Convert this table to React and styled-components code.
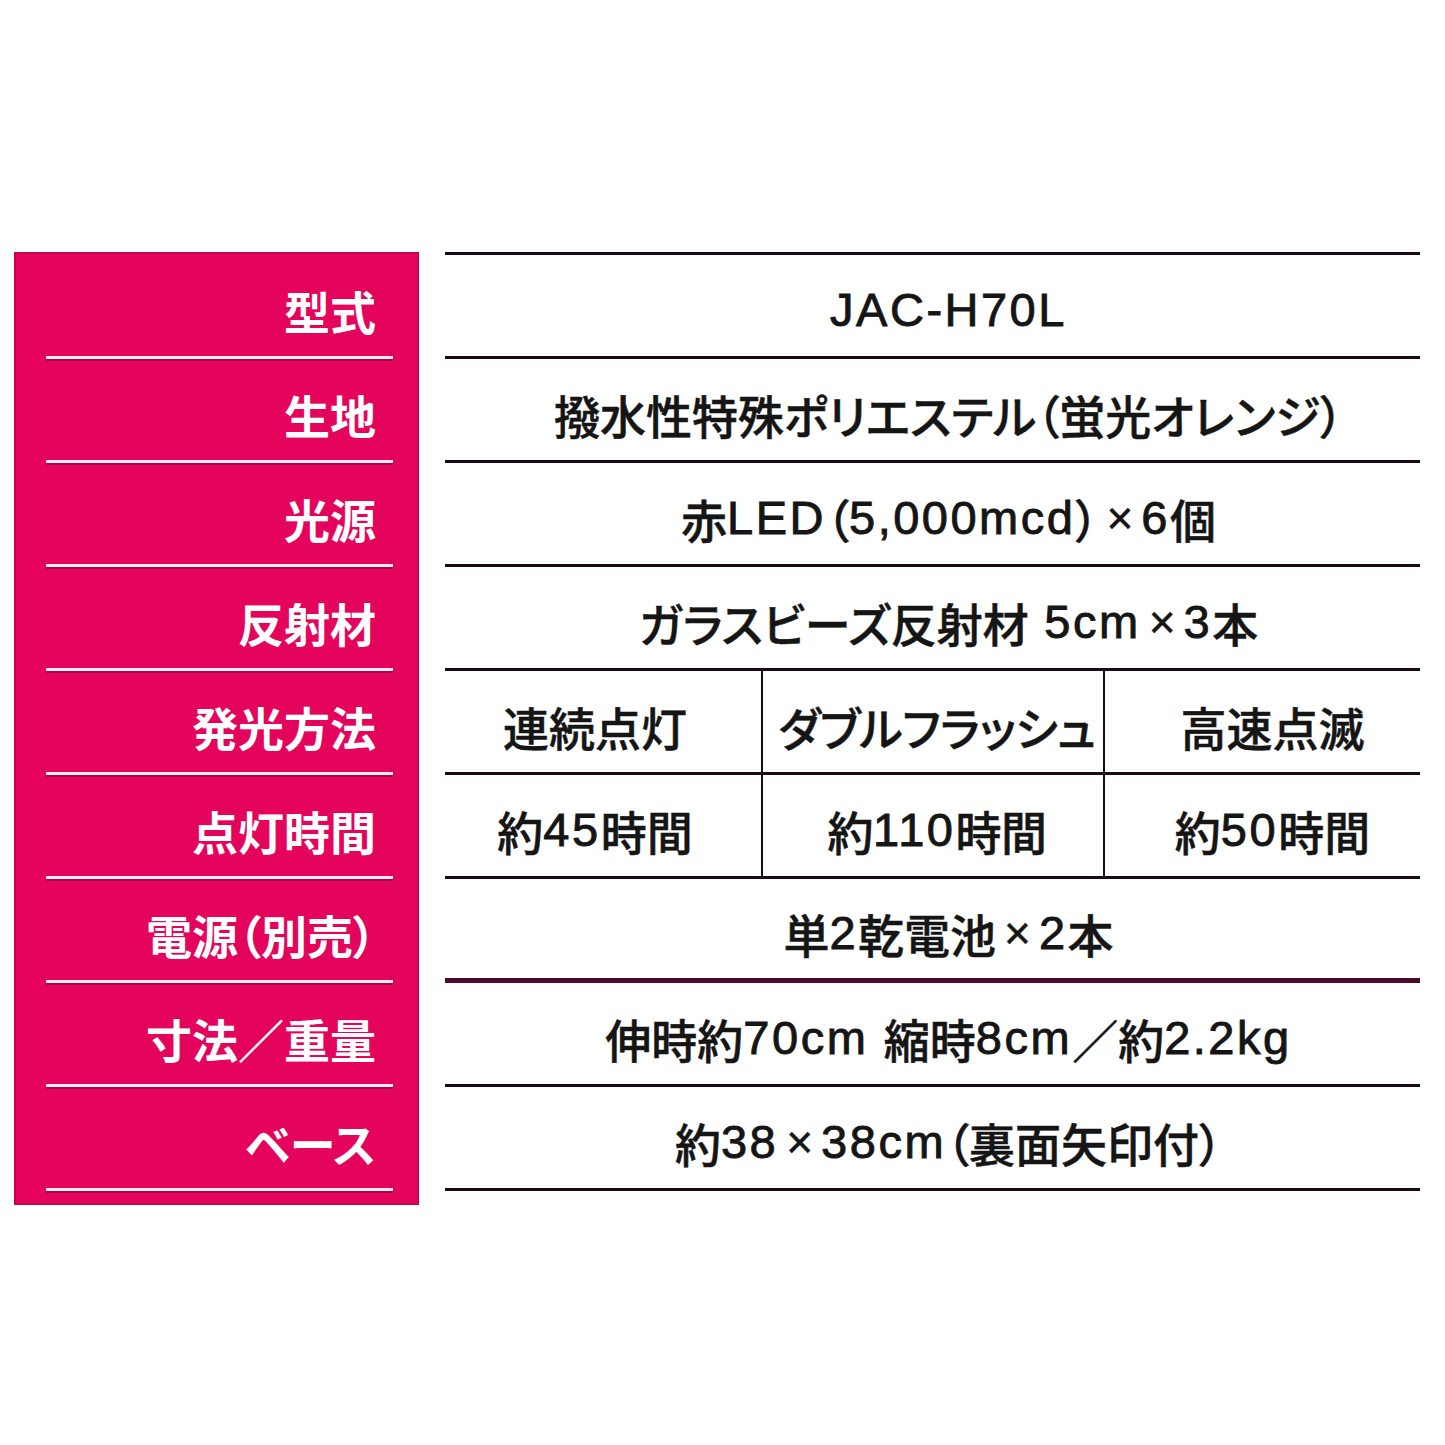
import React from "react";
import styled, { createGlobalStyle, css } from "styled-components";

const ROW = 104;
const INK = "#1c0b14";
const MAGENTA = "#e4045c";

const GlobalStyle = createGlobalStyle`
  html, body {
    margin: 0;
    padding: 0;
    background: #fff;
  }
  body {
    font-family: "Noto Sans CJK JP", sans-serif;
  }
`;

const Page = styled.div`
  width: 1445px;
  height: 1445px;
  box-sizing: border-box;
  padding: 252px 0 0 14px;
  display: flex;
  align-items: flex-start;
`;

const LabelColumn = styled.div`
  width: 405px;
  box-sizing: border-box;
  padding: 3px 0 14px;
  background: ${MAGENTA};
  box-shadow: inset 0 0 0 2px rgba(150, 0, 55, 0.35);
`;

const LabelRow = styled.div`
  height: ${ROW}px;
  box-sizing: border-box;
  margin: 0 26px 0 32px;
  padding: 8px 17px 0 0;
  display: flex;
  align-items: center;
  justify-content: flex-end;
  border-bottom: 3px solid #fdeef5;
  box-shadow: 0 2px 0 rgba(110, 0, 40, 0.45);
  color: #fff;
  font-size: 46px;
  font-weight: 700;
  font-feature-settings: "palt";
  white-space: nowrap;
`;

const ValueColumn = styled.div`
  width: 975px;
  margin-left: 26px;
  border-top: 3px solid ${INK};
`;

const ValueRow = styled.div`
  height: ${ROW}px;
  box-sizing: border-box;
  display: grid;
  grid-template-columns: ${p => (p.$split ? "318px 342px 1fr" : "1fr")};
  border-bottom: ${p => (p.$heavy ? "5px solid #4e0828" : `3px solid ${INK}`)};
`;

const ValueCell = styled.div`
  display: flex;
  align-items: center;
  justify-content: center;
  padding: 8px 0 0 32px;
  color: #151515;
  font-size: 46px;
  font-weight: 500;
  font-feature-settings: "palt";
  -webkit-text-stroke: 0.5px #151515;
  white-space: pre;
  ${p =>
    p.$split &&
    css`
      padding: 8px 0 0 0;
      &:first-child {
        padding-right: 16px;
      }
      &:nth-child(2) {
        padding-left: 8px;
        letter-spacing: -0.5px;
      }
      &:last-child {
        padding-left: 20px;
      }
    `}
  &:not(:last-child) {
    border-right: 2px solid ${INK};
  }
`;

const Latin = styled.span`
  font-family: "Liberation Sans", "Noto Sans CJK JP", sans-serif;
  font-size: 47px;
  font-weight: 400;
  letter-spacing: 2.5px;
  -webkit-text-stroke: 0.9px #151515;
`;

const Times = styled.span`
  font-family: "Liberation Sans", sans-serif;
  font-weight: 400;
  font-size: 46px;
  margin: 0 8px;
`;

const rows = [
  { label: "型式", values: ["JAC-H70L"] },
  { label: "生地", values: ["撥水性特殊ポリエステル（蛍光オレンジ）"] },
  { label: "光源", values: ["赤LED（5,000mcd）×6個"] },
  { label: "反射材", values: ["ガラスビーズ反射材 5cm×3本"] },
  { label: "発光方法", values: ["連続点灯", "ダブルフラッシュ", "高速点滅"] },
  { label: "点灯時間", values: ["約45時間", "約110時間", "約50時間"] },
  { label: "電源（別売）", values: ["単2乾電池×2本"], heavy: true },
  { label: "寸法／重量", values: ["伸時約70cm 縮時8cm／約2.2kg"] },
  { label: "ベース", values: ["約38×38cm（裏面矢印付）"] },
];

// latin runs get a helvetica-like face, the rest stays in the gothic
const Mixed = ({ text }) =>
  text.split(/([A-Za-z0-9.,\- ]+|×)/).map((part, i) => {
    if (!part) return null;
    if (part === "×") return <Times key={i}>×</Times>;
    if (i % 2) return <Latin key={i}>{part}</Latin>;
    return <React.Fragment key={i}>{part}</React.Fragment>;
  });

const App = () => (
  <>
    <GlobalStyle />
    <Page>
      <LabelColumn>
        {rows.map(row => (
          <LabelRow key={row.label}>{row.label}</LabelRow>
        ))}
      </LabelColumn>
      <ValueColumn>
        {rows.map(row => {
          const split = row.values.length > 1;
          return (
            <ValueRow key={row.label} $split={split} $heavy={row.heavy}>
              {row.values.map(value => (
                <ValueCell key={value} $split={split}>
                  <Mixed text={value} />
                </ValueCell>
              ))}
            </ValueRow>
          );
        })}
      </ValueColumn>
    </Page>
  </>
);

export default App;
